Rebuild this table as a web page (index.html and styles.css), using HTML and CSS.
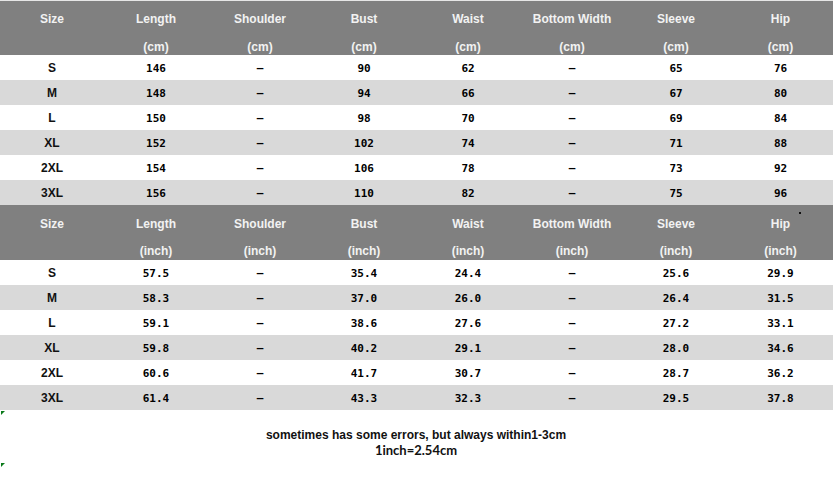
FILE: index.html
```html
<!DOCTYPE html>
<html>
<head>
<meta charset="utf-8">
<link rel="stylesheet" href="styles.css">
</head>
<body>
<div class="page">
<table class="chart">
<colgroup><col><col><col><col><col><col><col><col class="last"></colgroup>
<tr class="head first">
<th><span class="l1">Size</span><span class="l2"></span></th>
<th><span class="l1">Length</span><span class="l2">(cm)</span></th>
<th><span class="l1">Shoulder</span><span class="l2">(cm)</span></th>
<th><span class="l1">Bust</span><span class="l2">(cm)</span></th>
<th><span class="l1">Waist</span><span class="l2">(cm)</span></th>
<th><span class="l1">Bottom Width</span><span class="l2">(cm)</span></th>
<th><span class="l1">Sleeve</span><span class="l2">(cm)</span></th>
<th><span class="l1">Hip</span><span class="l2">(cm)</span></th>
</tr>
<tr class="odd"><td class="sz">S</td><td>146</td><td>–</td><td>90</td><td>62</td><td>–</td><td>65</td><td>76</td></tr>
<tr class="even"><td class="sz">M</td><td>148</td><td>–</td><td>94</td><td>66</td><td>–</td><td>67</td><td>80</td></tr>
<tr class="odd"><td class="sz">L</td><td>150</td><td>–</td><td>98</td><td>70</td><td>–</td><td>69</td><td>84</td></tr>
<tr class="even"><td class="sz">XL</td><td>152</td><td>–</td><td>102</td><td>74</td><td>–</td><td>71</td><td>88</td></tr>
<tr class="odd"><td class="sz">2XL</td><td>154</td><td>–</td><td>106</td><td>78</td><td>–</td><td>73</td><td>92</td></tr>
<tr class="even"><td class="sz">3XL</td><td>156</td><td>–</td><td>110</td><td>82</td><td>–</td><td>75</td><td>96</td></tr>
<tr class="head">
<th><span class="l1">Size</span><span class="l2"></span></th>
<th><span class="l1">Length</span><span class="l2">(inch)</span></th>
<th><span class="l1">Shoulder</span><span class="l2">(inch)</span></th>
<th><span class="l1">Bust</span><span class="l2">(inch)</span></th>
<th><span class="l1">Waist</span><span class="l2">(inch)</span></th>
<th><span class="l1">Bottom Width</span><span class="l2">(inch)</span></th>
<th><span class="l1">Sleeve</span><span class="l2">(inch)</span></th>
<th class="dotcell"><span class="l1">Hip</span><span class="l2">(inch)</span><i class="dot"></i></th>
</tr>
<tr class="odd"><td class="sz">S</td><td>57.5</td><td>–</td><td>35.4</td><td>24.4</td><td>–</td><td>25.6</td><td>29.9</td></tr>
<tr class="even"><td class="sz">M</td><td>58.3</td><td>–</td><td>37.0</td><td>26.0</td><td>–</td><td>26.4</td><td>31.5</td></tr>
<tr class="odd"><td class="sz">L</td><td>59.1</td><td>–</td><td>38.6</td><td>27.6</td><td>–</td><td>27.2</td><td>33.1</td></tr>
<tr class="even"><td class="sz">XL</td><td>59.8</td><td>–</td><td>40.2</td><td>29.1</td><td>–</td><td>28.0</td><td>34.6</td></tr>
<tr class="odd"><td class="sz">2XL</td><td>60.6</td><td>–</td><td>41.7</td><td>30.7</td><td>–</td><td>28.7</td><td>36.2</td></tr>
<tr class="even"><td class="sz">3XL</td><td>61.4</td><td>–</td><td>43.3</td><td>32.3</td><td>–</td><td>29.5</td><td>37.8</td></tr>
</table>
<div class="notes">
<i class="mark m1"></i>
<p class="note1">sometimes has some errors, but always within1-3cm</p>
<p class="note2">1inch=2.54cm</p>
<i class="mark m2"></i>
</div>
</div>
</body>
</html>
```
FILE: styles.css
```css
html, body {
  margin: 0;
  padding: 0;
  background: #ffffff;
}
.page {
  width: 833px;
}
.chart {
  width: 833px;
  border-collapse: collapse;
  table-layout: fixed;
  border-spacing: 0;
}
.chart col {
  width: 104px;
}
.chart col.last {
  width: 105px;
}
.chart th, .chart td {
  padding: 0;
  text-align: center;
}
.head th {
  background: #808080;
  color: #f2f2f2;
  font-family: "Liberation Sans", Arial, sans-serif;
  font-weight: bold;
  font-size: 12px;
  height: 54px;
  padding-top: 1px;
  vertical-align: top;
}
.head.first th {
  height: 54px;
  padding-top: 0;
  border-top: 1px solid #e6e6e6;
}
.head .l1 {
  display: block;
  height: 36px;
  line-height: 36px;
}
.head .l2 {
  display: block;
  height: 18px;
  line-height: 18px;
}
.head.first .l2 {
  line-height: 20px;
}
.dotcell {
  position: relative;
}
.dot {
  position: absolute;
  left: 71px;
  top: 7px;
  width: 2px;
  height: 2px;
  background: #111;
}
.odd td {
  background: #ffffff;
}
.even td {
  background: #d9d9d9;
}
.chart td {
  height: 23px;
  padding-top: 2px;
  font-family: "DejaVu Sans Mono", "Liberation Mono", monospace;
  font-weight: bold;
  font-size: 11px;
  color: #000;
  line-height: 23px;
}
.chart td.sz {
  font-family: "Liberation Sans", Arial, sans-serif;
  font-size: 12px;
  color: #111;
}
.notes {
  position: relative;
  height: 67px;
  padding-top: 17px;
  box-sizing: border-box;
  text-align: center;
  width: 832px;
}
.notes p {
  margin: 0;
  color: #111;
}
.note1 {
  font-family: "Liberation Sans", Arial, sans-serif;
  font-weight: bold;
  font-size: 12px;
  line-height: 16px;
}
.note2 {
  font-family: Lato, "Liberation Sans", sans-serif;
  font-weight: bold;
  font-size: 13px;
  line-height: 14px;
}
.mark {
  position: absolute;
  left: 1px;
  width: 0;
  height: 0;
  border-top: 4px solid #0a7a1a;
  border-right: 4px solid transparent;
}
.m1 { top: 1px; }
.m2 { top: 53px; }
```
